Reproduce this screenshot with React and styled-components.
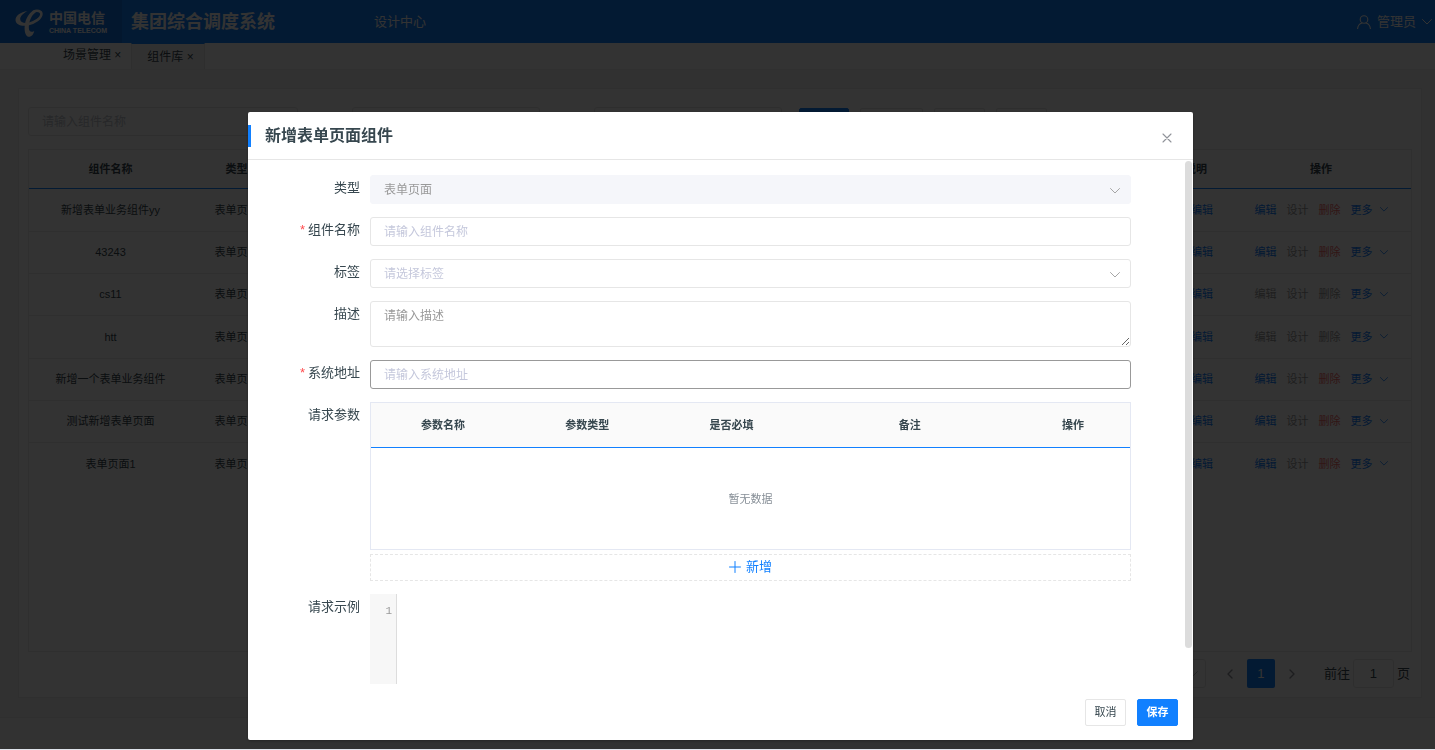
import React from "react";
import styled, { createGlobalStyle, css } from "styled-components";

const BLUE = "#1180ff";
const INK = "#37474f";
const LINE = "#e6e6e6";

const GlobalStyle = createGlobalStyle`
  *, *::before, *::after { box-sizing: border-box; }
  body {
    margin: 0;
    background: #f5f5f5;
    color: ${INK};
    font: 13px/20px "Liberation Sans", "Noto Sans CJK SC", sans-serif;
  }
  button, input, select, textarea { font: inherit; color: inherit; margin: 0; }
  button { cursor: pointer; }
  h1, h2, p { margin: 0; }
`;

/* ---------- icons ---------- */

const Svg = styled.svg`
  display: block;
  flex: none;
  fill: none;
  stroke: currentColor;
  stroke-linecap: round;
  stroke-linejoin: round;
`;

const Chevron = ({ width = 10, height = 6 }) => (
  <Svg width={width} height={height} viewBox="0 0 10 6" aria-hidden="true">
    <path d="M0.5 0.5 L5 5 L9.5 0.5" />
  </Svg>
);

const Arrow = ({ next }) => (
  <Svg width="6" height="10" viewBox="0 0 6 10" strokeWidth="1.4" aria-hidden="true">
    <path d={next ? "M1 1 L5 5 L1 9" : "M5 1 L1 5 L5 9"} />
  </Svg>
);

const UserIcon = () => (
  <Svg width="14" height="14" viewBox="0 0 14 14" strokeWidth="1.1" aria-hidden="true">
    <circle cx="7" cy="4.5" r="3.8" />
    <path d="M0.6 13.6 C0.9 10.6 3 8.6 5 8 M13.4 13.6 C13.1 10.6 11 8.6 9 8" />
  </Svg>
);

const CrossIcon = () => (
  <Svg width="10" height="10" viewBox="0 0 10 10" strokeWidth="1.1" aria-hidden="true">
    <path d="M1 1 L9 9 M9 1 L1 9" />
  </Svg>
);

const PlusIcon = () => (
  <Svg width="12" height="12" viewBox="0 0 12 12" aria-hidden="true">
    <path d="M6 0.5 V11.5 M0.5 6 H11.5" />
  </Svg>
);

const TelecomMark = () => (
  <Svg width="28" height="28" viewBox="0 0 28 28" aria-hidden="true">
    <path
      fill="currentColor"
      stroke="none"
      d="M12.5 2 C5.5 3 0.4 6.8 0.5 11 C0.6 15.8 6.6 17.6 13 16.4 L14 13.6 C9.4 14.6 5.4 13.6 5.2 10.2 C5 7.2 8.6 4.2 12.5 2 Z"
    />
    <path strokeWidth="2.6" d="M13 15.2 C19.6 13.6 26.4 9.2 26.4 5 C26.4 2 22 1 18.6 2.6" />
    <path
      fill="currentColor"
      stroke="none"
      d="M20.5 1 C15.2 1.8 9.8 9.6 9.6 18.4 C9.5 23.6 11 27.6 14 27.8 C16.6 27.8 18.6 25.4 19.2 22 C16.4 23.8 13.8 22.8 13.8 18.6 C13.8 12.4 16.6 6 20.5 3.4 Z"
    />
  </Svg>
);

/* ---------- page behind the dialog ---------- */

const Page = styled.div`
  display: flex;
  flex-direction: column;
  min-height: 100vh;
  border-bottom: 1px solid #dfe3ea;
`;

const TopBar = styled.header`
  display: flex;
  align-items: center;
  height: 43px;
  background: ${BLUE};
  color: #fff;
`;

const Brand = styled.div`
  display: flex;
  align-items: center;
  gap: 6px;
  width: 122px;
  height: 43px;
  padding: 2px 0 0 15px;
  background: #0f73e6;
`;

const BrandWords = styled.div`
  display: flex;
  flex-direction: column;
  white-space: nowrap;
  font-size: 14px;
  line-height: 17px;
  font-weight: 700;
`;

const BrandLatin = styled.span`
  font-size: 7px;
  line-height: 8px;
`;

const SystemName = styled.h1`
  width: 252px;
  padding-left: 9px;
  font-size: 18px;
  line-height: 24px;
`;

const NavLink = styled.a`
  color: inherit;
  text-decoration: none;
`;

const UserButton = styled.button`
  display: flex;
  align-items: center;
  gap: 6px;
  margin-left: auto;
  padding: 0 3px 0 0;
  border: 0;
  background: none;
`;

const TabBar = styled.nav`
  display: flex;
  align-items: flex-end;
  height: 27px;
  padding-left: 48px;
  background: #fff;
  border-bottom: 1px solid #f0f0f0;
`;

const Tab = styled.button`
  height: 26px;
  padding: 0 10px 2px 15px;
  border: 0;
  background: none;
  font-size: 12px;
  line-height: 20px;
  white-space: nowrap;
  ${(p) =>
    p.$active &&
    css`
      padding-bottom: 0;
      border: 1px solid ${LINE};
      border-top: 1px solid ${BLUE};
      border-bottom: 0;
      background: #f5f5f5;
    `}
`;

const Main = styled.main`
  display: flex;
  flex: 1;
  padding: 18px 13px 19px 18px;
`;

const Card = styled.section`
  display: flex;
  flex-direction: column;
  flex: 1;
  padding: 18px 9px 9px;
  border: 1px solid #ebebeb;
  background: #fff;
`;

const Filters = styled.div`
  display: flex;
  gap: 11px;
`;

const FilterInput = styled.input`
  width: ${(p) => p.$width}px;
  height: 29px;
  margin-right: ${(p) => p.$after}px;
  padding: 0 13px;
  border: 1px solid ${LINE};
  border-radius: 3px;
  background: #fff;
  font-size: 12px;
  &::placeholder { color: #c0c4cc; }
`;

const FilterButton = styled.button`
  width: ${(p) => p.$width}px;
  height: 27px;
  margin-top: 1px;
  border: 1px solid ${(p) => (p.$primary ? BLUE : LINE)};
  border-radius: 2px;
  background: ${(p) => (p.$primary ? BLUE : "#fff")};
`;

const ListFrame = styled.div`
  flex: 1;
  margin: 13px 0 7px;
  border: 1px solid #ebebeb;
`;

const List = styled.table`
  width: 100%;
  table-layout: fixed;
  border-collapse: collapse;
  font-size: 11px;
  line-height: 16px;
  text-align: center;
  th, td { padding: 0; white-space: nowrap; }
  th { height: 38px; border-bottom: 1px solid ${BLUE}; }
  td { height: 42px; border-bottom: 1px solid #ebebeb; }
  tr:nth-child(3n + 1) td { height: 43px; }
  tr:last-child td { border-bottom: 0; }
`;

const NoteHead = styled.th`
  text-align: right;
  && { padding-right: 24px; }
`;

const NoteCell = styled.td`
  text-align: right;
  && { padding-right: 18px; }
`;

const Actions = styled.div`
  display: flex;
  align-items: center;
  justify-content: center;
  gap: 10px;
`;

const tones = { blue: BLUE, red: "#f56c6c", grey: "#999" };

const Action = styled.button`
  display: flex;
  align-items: center;
  gap: 7px;
  padding: 0;
  border: 0;
  background: none;
  color: ${(p) => tones[p.$tone]};
`;

const Inline = styled(Action)`
  display: inline;
`;

const Pager = styled.div`
  display: flex;
  align-items: center;
  justify-content: flex-end;
  gap: 3px;
  height: 29px;
  padding-right: 2px;
`;

const PagerSize = styled.button`
  display: flex;
  align-items: center;
  justify-content: flex-end;
  width: 96px;
  height: 29px;
  margin-right: 7px;
  padding-right: 7px;
  border: 1px solid ${LINE};
  border-radius: 3px;
  background: #fff;
  color: #bbb;
`;

const PagerButton = styled.button`
  display: flex;
  align-items: center;
  justify-content: center;
  width: 28px;
  height: 29px;
  padding: 0;
  border: 0;
  border-radius: 2px;
  background: ${(p) => (p.$current ? BLUE : "none")};
  color: ${(p) => (p.$current ? "#fff" : "#909399")};
`;

const PagerJump = styled.label`
  display: flex;
  align-items: center;
  gap: 3px;
  margin-left: 15px;
`;

const PagerInput = styled.input`
  width: 41px;
  height: 29px;
  padding: 0;
  border: 1px solid ${LINE};
  border-radius: 3px;
  background: #fff;
  text-align: center;
`;

const Footer = styled.footer`
  height: 32px;
  border-top: 1px solid #ebebeb;
  background: #fafafa;
`;

/* ---------- dialog ---------- */

const Overlay = styled.div`
  position: fixed;
  inset: 0 0 1px;
  display: flex;
  padding: 112px 242px 9px 248px;
  background: rgba(0, 0, 0, 0.8);
`;

const Dialog = styled.div`
  display: flex;
  flex-direction: column;
  flex: 1;
  min-width: 0;
  border-radius: 2px;
  background: #fff;
  box-shadow: 0 1px 3px rgba(0, 0, 0, 0.3);
`;

const DialogHead = styled.header`
  display: flex;
  align-items: center;
  justify-content: space-between;
  height: 48px;
  padding-right: 21px;
  border-bottom: 1px solid ${LINE};
`;

const DialogTitle = styled.h2`
  padding-left: 14px;
  border-left: 3px solid ${BLUE};
  font-size: 16px;
  line-height: 22px;
`;

const CloseButton = styled.button`
  display: flex;
  padding: 4px 0 0;
  border: 0;
  background: none;
  color: #909399;
`;

const DialogBody = styled.div`
  position: relative;
  display: flex;
  flex: 1;
  min-height: 0;
`;

const ScrollThumb = styled.div`
  position: absolute;
  top: 1px;
  right: 1px;
  width: 7px;
  height: 93%;
  border-radius: 4px;
  background: #dcdcdc;
`;

const Form = styled.form`
  display: flex;
  flex-direction: column;
  gap: 13px;
  flex: 1;
  padding: 15px 62px 13px 0;
  overflow-y: auto;
  scrollbar-width: none;
`;

const Row = styled.div`
  display: grid;
  grid-template-columns: 112px minmax(0, 1fr);
  column-gap: 10px;
`;

const labelText = css`
  padding-top: 3px;
  font-size: 13px;
  line-height: 20px;
  text-align: right;
`;

const Label = styled.label`
  ${labelText}
`;

const Caption = styled.span`
  ${labelText}
`;

const Required = styled.span`
  margin-right: 3px;
  color: #ff4d4f;
`;

const field = css`
  display: block;
  width: 100%;
  padding: 0 13px;
  border: 1px solid ${(p) => (p.$hover ? "#999" : LINE)};
  border-radius: 3px;
  outline: 0;
  background: #fff;
  font-size: 12px;
`;

const Input = styled.input`
  ${field}
  height: 29px;
  &::placeholder { color: #c5c8dc; }
`;

const SelectBox = styled.div`
  position: relative;
`;

const SelectArrow = styled.span`
  position: absolute;
  right: 11px;
  top: 13px;
  color: #a6a6a6;
  pointer-events: none;
`;

const Select = styled.select`
  ${field}
  height: 29px;
  appearance: none;
  color: #c5c8dc;
  &:disabled {
    border-color: #f5f6fa;
    background: #f5f6fa;
    color: #999;
    opacity: 1;
  }
`;

const Textarea = styled.textarea`
  ${field}
  height: 46px;
  padding: 4px 13px;
  line-height: 20px;
  resize: vertical;
  &::placeholder { color: #999; }
`;

const Params = styled.table`
  width: 100%;
  table-layout: fixed;
  border: 1px solid #e4e8f3;
  border-spacing: 0;
  font-size: 11px;
  line-height: 16px;
  text-align: center;
  th {
    height: 45px;
    padding: 0;
    border-bottom: 1px solid ${BLUE};
    background: #fafafa;
  }
  td {
    height: 101px;
    padding: 0;
    color: #868e96;
  }
`;

const AddButton = styled.button`
  display: flex;
  align-items: center;
  justify-content: center;
  gap: 5px;
  width: 100%;
  height: 27px;
  margin-top: 4px;
  padding: 0 0 2px;
  border: 1px dashed ${LINE};
  background: none;
  color: ${BLUE};
`;

const Editor = styled.div`
  display: flex;
  height: 118px;
`;

const Gutter = styled.div`
  width: 27px;
  padding: 7px 4px 0 0;
  border-right: 1px solid #ddd;
  background: #f7f7f7;
  color: #999;
  font: 11px/20px "Liberation Mono", monospace;
  text-align: right;
`;

const EditorInput = styled.textarea`
  flex: 1;
  padding: 7px 4px;
  border: 0;
  outline: 0;
  resize: none;
  background: #fff;
  font: 11px/20px "Liberation Mono", monospace;
`;

const DialogFoot = styled.footer`
  display: flex;
  justify-content: flex-end;
  gap: 11px;
  padding: 15px 15px 14px;
`;

const FootButton = styled.button`
  width: 41px;
  height: 27px;
  padding: 0 0 1px;
  border: 1px solid ${(p) => (p.$primary ? BLUE : LINE)};
  border-radius: 2px;
  background: ${(p) => (p.$primary ? BLUE : "#fff")};
  color: ${(p) => (p.$primary ? "#fff" : INK)};
  font-size: 11px;
  line-height: 16px;
  font-weight: ${(p) => (p.$primary ? 700 : 400)};
`;

const components = [
  { name: "新增表单业务组件yy", editable: true },
  { name: "43243", editable: true },
  { name: "cs11", editable: false },
  { name: "htt", editable: false },
  { name: "新增一个表单业务组件", editable: true },
  { name: "测试新增表单页面", editable: true },
  { name: "表单页面1", editable: true },
];

function ComponentList() {
  return (
    <ListFrame>
      <List>
        <colgroup>
          <col style={{ width: 163 }} />
          <col style={{ width: 89 }} />
          <col />
          <col style={{ width: 80 }} />
          <col style={{ width: 180 }} />
        </colgroup>
        <thead>
          <tr>
            <th scope="col">组件名称</th>
            <th scope="col">类型</th>
            <th />
            <NoteHead scope="col">说明</NoteHead>
            <th scope="col">操作</th>
          </tr>
        </thead>
        <tbody>
          {components.map((item) => (
            <tr key={item.name}>
              <td>{item.name}</td>
              <td>表单页面</td>
              <td />
              <NoteCell>
                <Inline $tone="blue">编辑</Inline>
              </NoteCell>
              <td>
                <Actions>
                  <Action $tone={item.editable ? "blue" : "grey"}>编辑</Action>
                  <Action $tone="grey">设计</Action>
                  <Action $tone={item.editable ? "red" : "grey"}>删除</Action>
                  <Action $tone="blue">
                    更多
                    <Chevron width={8} height={5} />
                  </Action>
                </Actions>
              </td>
            </tr>
          ))}
        </tbody>
      </List>
    </ListFrame>
  );
}

function ComponentDialog() {
  return (
    <Overlay>
      <Dialog role="dialog" aria-modal="true" aria-labelledby="dialog-title">
        <DialogHead>
          <DialogTitle id="dialog-title">新增表单页面组件</DialogTitle>
          <CloseButton type="button" aria-label="关闭">
            <CrossIcon />
          </CloseButton>
        </DialogHead>
        <DialogBody>
          <Form id="component-form">
            <Row>
              <Label htmlFor="type">类型</Label>
              <SelectBox>
                <Select id="type" disabled>
                  <option>表单页面</option>
                </Select>
                <SelectArrow><Chevron /></SelectArrow>
              </SelectBox>
            </Row>
            <Row>
              <Label htmlFor="name"><Required>*</Required>组件名称</Label>
              <Input id="name" placeholder="请输入组件名称" />
            </Row>
            <Row>
              <Label htmlFor="tag">标签</Label>
              <SelectBox>
                <Select id="tag">
                  <option>请选择标签</option>
                </Select>
                <SelectArrow><Chevron /></SelectArrow>
              </SelectBox>
            </Row>
            <Row>
              <Label htmlFor="description">描述</Label>
              <Textarea id="description" placeholder="请输入描述" />
            </Row>
            <Row>
              <Label htmlFor="address"><Required>*</Required>系统地址</Label>
              <Input id="address" placeholder="请输入系统地址" $hover />
            </Row>
            <Row>
              <Caption id="params-label">请求参数</Caption>
              <div>
                <Params aria-labelledby="params-label">
                  <colgroup>
                    <col style={{ width: "19%" }} />
                    <col style={{ width: "19%" }} />
                    <col style={{ width: "19%" }} />
                    <col style={{ width: "28%" }} />
                    <col style={{ width: "15%" }} />
                  </colgroup>
                  <thead>
                    <tr>
                      <th scope="col">参数名称</th>
                      <th scope="col">参数类型</th>
                      <th scope="col">是否必填</th>
                      <th scope="col">备注</th>
                      <th scope="col">操作</th>
                    </tr>
                  </thead>
                  <tbody>
                    <tr>
                      <td colSpan={5}>暂无数据</td>
                    </tr>
                  </tbody>
                </Params>
                <AddButton type="button"><PlusIcon />新增</AddButton>
              </div>
            </Row>
            <Row>
              <Label htmlFor="example">请求示例</Label>
              <Editor>
                <Gutter>1</Gutter>
                <EditorInput id="example" />
              </Editor>
            </Row>
          </Form>
          <ScrollThumb />
        </DialogBody>
        <DialogFoot>
          <FootButton type="button">取消</FootButton>
          <FootButton type="submit" form="component-form" $primary>保存</FootButton>
        </DialogFoot>
      </Dialog>
    </Overlay>
  );
}

export default function App() {
  return (
    <>
      <GlobalStyle />
      <Page>
        <TopBar>
          <Brand>
            <TelecomMark />
            <BrandWords>
              中国电信
              <BrandLatin>CHINA TELECOM</BrandLatin>
            </BrandWords>
          </Brand>
          <SystemName>集团综合调度系统</SystemName>
          <NavLink href="#design">设计中心</NavLink>
          <UserButton>
            <UserIcon />
            管理员
            <Chevron />
          </UserButton>
        </TopBar>
        <TabBar>
          <Tab>场景管理 ×</Tab>
          <Tab $active>组件库 ×</Tab>
        </TabBar>
        <Main>
          <Card>
            <Filters>
              <FilterInput $width={270} $after={43} placeholder="请输入组件名称" aria-label="组件名称" />
              <FilterInput $width={188} $after={43} aria-label="类型" />
              <FilterInput $width={188} $after={6} aria-label="标签" />
              <FilterButton $width={50} $primary aria-label="查询" />
              <FilterButton $width={63} aria-label="重置" />
              <FilterButton $width={51} aria-label="新增" />
              <FilterButton $width={51} aria-label="导入" />
            </Filters>
            <ComponentList />
            <Pager>
              <PagerSize aria-label="每页条数"><Chevron /></PagerSize>
              <PagerButton aria-label="上一页"><Arrow /></PagerButton>
              <PagerButton $current>1</PagerButton>
              <PagerButton aria-label="下一页"><Arrow next /></PagerButton>
              <PagerJump>
                前往
                <PagerInput defaultValue="1" />
                页
              </PagerJump>
            </Pager>
          </Card>
        </Main>
        <Footer />
      </Page>
      <ComponentDialog />
    </>
  );
}
